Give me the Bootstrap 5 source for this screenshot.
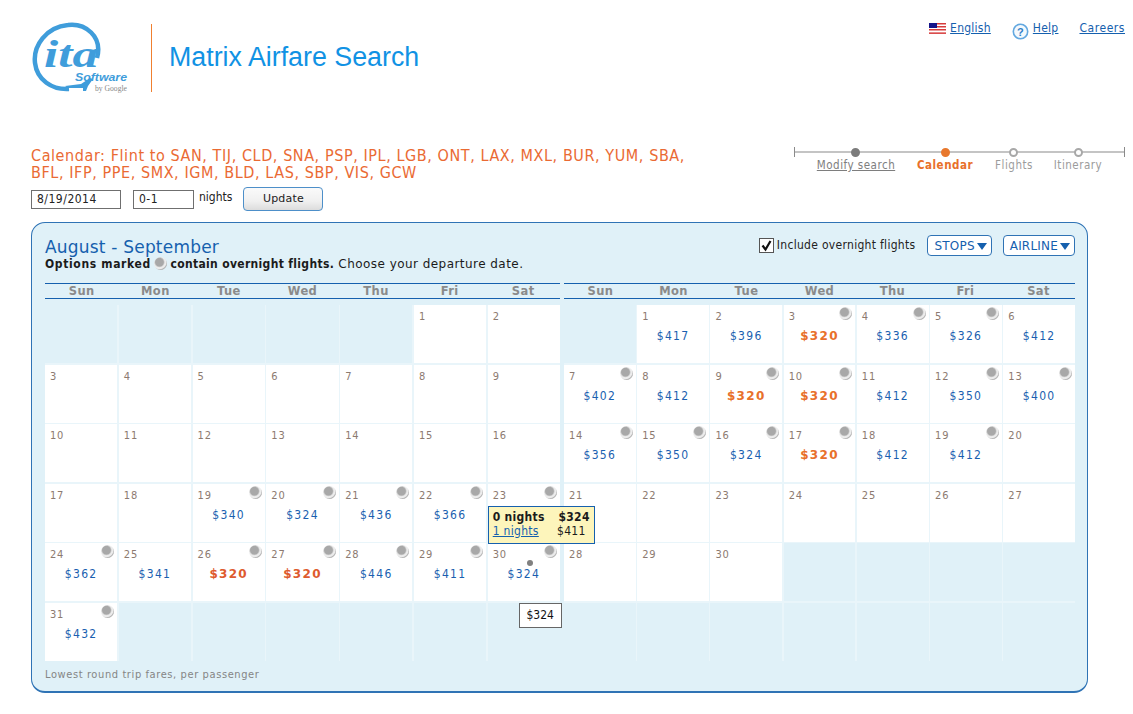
<!DOCTYPE html>
<html lang="en">
<head>
<meta charset="utf-8">
<title>Matrix Airfare Search</title>
<link href="https://cdn.jsdelivr.net/npm/bootstrap@5.3.0/dist/css/bootstrap.min.css" rel="stylesheet">
<style>
body{font-family:"DejaVu Sans","Liberation Sans",sans-serif;font-size:11px;color:#222;background:#fff;width:1133px;height:714px;overflow:hidden;font-stretch:condensed}
a{color:#1560ae}
.page-top{height:145px;padding:0 8px 0 31px}
.logo-wrap{width:120px;padding-top:22px}
.brand-rule{width:1px;height:68px;background:#f08030;margin-top:24px}
.brand-title{font-family:"Liberation Sans",sans-serif;font-size:26.8px;color:#1192e4;margin:41px 0 0 17px;line-height:32px;font-weight:400;font-stretch:normal}
.top-links{padding-top:19px;gap:21px;font-size:12px;letter-spacing:.25px}
.link-wide{letter-spacing:.55px}
.trip-head{padding:0 8px 0 31px;height:75px;margin-top:2px}
.trip-title{font-family:"DejaVu Sans",sans-serif;font-size:16px;line-height:17px;color:#ea6a33;margin:0;font-weight:400;width:668px;letter-spacing:.58px}
.trip-form{margin-top:6px;gap:12px;font-size:12px}
.field{height:19px;border:1px solid #6f6f6f;padding:0 5px;font:12px "DejaVu Sans",sans-serif;font-stretch:condensed;letter-spacing:.5px;color:#222;border-radius:0;background:#fff}
.f-date{width:90px}
.f-nights{width:61px}
.nights-word{margin:-5px 0 0 -7px}
.update-btn{width:80px;height:24px;padding:0;font-size:11px;letter-spacing:.2px;color:#222;border:1px solid #4d8fc9;border-radius:4px;background:linear-gradient(#fafafa,#f0f0f0 60%,#dcdcdc);margin-left:-1px}
.steps{width:331px;position:relative;height:40px;margin-top:-3px}
.step-line{position:absolute;left:0;right:0;top:7px;height:2px;background:#c4c4c4}
.step-end{position:absolute;top:3px;width:1px;height:10px;background:#8a8a8a}
.step-dot{position:absolute;top:4px;width:9px;height:9px;border-radius:50%;background:#fff;border:2px solid #a8a8a8}
.step-lbl{position:absolute;top:13px;font-size:11.5px;letter-spacing:.5px;white-space:nowrap;color:#9c9c9c;transform:translateX(-50%)}
.panel{margin-left:31px;width:1057px;height:471px;background:#e0f1f8;border:1px solid #2f73b5;border-width:1px 1px 2px 1px;border-radius:14px;padding:12px 12px 0 13px;position:relative}
.panel-title{font-size:17px;line-height:21px;color:#1560ae;font-weight:400;margin:2px 0 0;letter-spacing:.2px;font-stretch:normal}
.panel-note{font-size:12px;line-height:15px;color:#1b1b1b;letter-spacing:.45px;margin-top:-1px;font-stretch:normal}
.panel-note b{font-stretch:condensed;letter-spacing:.33px}
.note-lead{letter-spacing:.65px}
.ctrls{gap:11px;font-size:12px;letter-spacing:.3px}
.ovr-lbl{margin-top:1px;margin-right:1px}
.chk{width:15px;height:15px;border:1px solid #555;background:#fff;display:inline-flex;margin-right:3px;margin-left:-1px}
.filter-btn{height:21px;border:1px solid #2f73b5;border-radius:4px;background:#fff;color:#1560ae;font-size:12px;padding:0 4px 0 6px;letter-spacing:.2px}
.filter-btn::after{content:"";display:inline-block;border:5px solid transparent;border-top:7px solid #1560ae;border-bottom:0;margin-left:2px;vertical-align:0}
.months{gap:4px;margin-top:11px}
.mon-a{width:515px}
.mon-b{width:511px}
.dow{display:grid;grid-template-columns:repeat(7,1fr);border-top:1px solid #1560ae;border-bottom:1px solid #1560ae;height:16px;line-height:14px;font-weight:700;color:#8a8a8a;text-align:center;letter-spacing:.4px;font-stretch:normal}
.dow span{font-size:11.5px}
.dgrid{display:grid;grid-template-columns:repeat(7,1fr);grid-auto-rows:58px;gap:1.5px;margin-top:6px;background:#e9f5fa}
.day{background:#fff;position:relative;padding:5px 0 0 5px;font-size:11px;letter-spacing:.8px;color:#8c7a70;line-height:14px}
.day.off{background:#e0f1f8}
.moon{position:absolute;top:2px;right:3px;width:13px;height:13px;border-radius:50%;background:radial-gradient(circle at 42% 40%,#a8a8a8 0 36%,#ececec 50% 60%,#a2a2a2 72%)}
.moon-inl{position:static;display:inline-block;vertical-align:-2px;margin:0 -1px}
.fare{position:absolute;left:0;right:0;top:24px;text-align:center;font-size:12px;line-height:14px;color:#1a5fb0;letter-spacing:1.3px}
.fare.low{color:#e8702a;font-weight:700;font-stretch:normal}
.fare.low-r{color:#de5b2e;font-weight:700;font-stretch:normal}
.pop{position:absolute;left:0;top:22px;width:107px;height:38px;background:#fdf5bb;border:1px solid #1560ae;z-index:3;padding:3px 4px;font-size:12px;line-height:14px;color:#1b1b1b;letter-spacing:.3px}
.tip{position:absolute;left:31px;top:60px;width:43px;height:25px;background:#fff;border:1px solid #666;z-index:3;font-size:12px;line-height:23px;text-align:center;color:#111;letter-spacing:0}
.pt{position:absolute;left:39px;top:17px;width:6px;height:6px;border-radius:50%;background:#808080}
.foot-note{font-size:11px;color:#858585;letter-spacing:.6px;margin-top:6px}
</style>
</head>
<body>
<div class="page-top d-flex">
  <div class="logo-wrap">
    <svg width="110" height="76" viewBox="0 0 110 76" aria-label="ITA Software by Google">
      <path d="M66 36C72 14 54 1 37 3 15 5 2 24 4 41c2 17 17 27 34 26" fill="none" stroke="#3f9ddb" stroke-width="4.5"/>
      <path d="M34 64l16-2 9-6 3 1-5 7-2 5-3 0 0-3-15 0z" fill="#3f9ddb"/>
      <text x="13" y="45" font-family="Liberation Serif" font-style="italic" font-weight="700" font-size="38" fill="#3f9ddb" textLength="54" lengthAdjust="spacingAndGlyphs">ita</text>
      <text x="44" y="59" font-family="Liberation Sans" font-style="italic" font-weight="700" font-size="11.5" fill="#3f9ddb" textLength="52" lengthAdjust="spacingAndGlyphs">Software</text>
      <text x="64" y="69" font-family="Liberation Serif" font-size="7.5" fill="#888" textLength="32" lengthAdjust="spacingAndGlyphs">by Google</text>
    </svg>
  </div>
  <div class="brand-rule flex-shrink-0"></div>
  <h1 class="brand-title">Matrix Airfare Search</h1>
  <div class="top-links d-flex ms-auto align-items-start">
    <span class="d-flex align-items-start gap-1">
      <svg width="17" height="11" viewBox="0 0 17 11" class="mt-1"><rect width="17" height="11" fill="#fff"/><g fill="#d63a3a"><rect width="17" height="1.5" y="0"/><rect width="17" height="1.5" y="3"/><rect width="17" height="1.5" y="6"/><rect width="17" height="1.5" y="9.4"/></g><rect width="8" height="5" fill="#14148a"/></svg>
      <a href="#">English</a>
    </span>
    <span class="d-flex align-items-start gap-1">
      <svg width="17" height="17" viewBox="0 0 17 17" class="mt-1"><circle cx="8.5" cy="8.5" r="7.2" fill="#f4f9fd" stroke="#62a8e0" stroke-width="1.6"/><text x="8.5" y="12.5" text-anchor="middle" font-family="Liberation Sans" font-weight="700" font-size="11" fill="#2f80c8">?</text></svg>
      <a href="#">Help</a>
    </span>
    <a class="link-wide" href="#">Careers</a>
  </div>
</div>
<div class="trip-head d-flex justify-content-between">
  <div>
    <h2 class="trip-title">Calendar: Flint to SAN, TIJ, CLD, SNA, PSP, IPL, LGB, ONT, LAX, MXL, BUR, YUM, SBA, BFL, IFP, PPE, SMX, IGM, BLD, LAS, SBP, VIS, GCW</h2>
    <div class="trip-form d-flex align-items-center">
      <input class="field f-date" value="8/19/2014" aria-label="Date">
      <input class="field f-nights" value="0-1" aria-label="Nights">
      <span class="nights-word">nights</span>
      <button class="btn update-btn" type="button">Update</button>
    </div>
  </div>
  <div class="steps">
    <div class="step-line"></div>
    <div class="step-end" style="left:0"></div>
    <div class="step-end" style="right:0"></div>
    <div class="step-dot" style="left:57px;background:#7c7c7c;border-color:#7c7c7c"></div>
    <div class="step-dot" style="left:147px;background:#e8782d;border-color:#e8782d"></div>
    <div class="step-dot" style="left:215px"></div>
    <div class="step-dot" style="left:280px"></div>
    <a class="step-lbl" href="#" style="left:62px;color:#7e7e7e">Modify search</a>
    <span class="step-lbl fw-bold" style="left:151px;color:#e8702a">Calendar</span>
    <span class="step-lbl" style="left:220px">Flights</span>
    <span class="step-lbl" style="left:284px">Itinerary</span>
  </div>
</div>
<div class="panel">
  <div class="d-flex justify-content-between">
    <div>
      <h3 class="panel-title">August - September</h3>
      <div class="panel-note"><b><span class="note-lead">Options marked </span><i class="moon moon-inl"></i> contain overnight flights.</b> Choose your departure date.</div>
    </div>
    <div class="ctrls d-flex align-items-start">
      <span class="ovr-lbl d-flex align-items-center"><span class="chk"><svg width="13" height="13" viewBox="0 0 13 13"><path d="M2.5 6.5l3 4 5-8.5" fill="none" stroke="#111" stroke-width="2.2"/></svg></span>Include overnight flights</span>
      <button class="filter-btn" type="button">STOPS</button>
      <button class="filter-btn" type="button">AIRLINE</button>
    </div>
  </div>
  <div class="months d-flex">
    <div class="mon-a">
      <div class="dow"><span>Sun</span><span>Mon</span><span>Tue</span><span>Wed</span><span>Thu</span><span>Fri</span><span>Sat</span></div>
      <div class="dgrid">
        <div class="day off"></div><div class="day off"></div><div class="day off"></div><div class="day off"></div><div class="day off"></div>
        <div class="day">1</div><div class="day">2</div>
        <div class="day">3</div><div class="day">4</div><div class="day">5</div><div class="day">6</div><div class="day">7</div><div class="day">8</div><div class="day">9</div>
        <div class="day">10</div><div class="day">11</div><div class="day">12</div><div class="day">13</div><div class="day">14</div><div class="day">15</div><div class="day">16</div>
        <div class="day">17</div><div class="day">18</div>
        <div class="day">19<i class="moon"></i><div class="fare">$340</div></div>
        <div class="day">20<i class="moon"></i><div class="fare">$324</div></div>
        <div class="day">21<i class="moon"></i><div class="fare">$436</div></div>
        <div class="day">22<i class="moon"></i><div class="fare">$366</div></div>
        <div class="day">23<i class="moon"></i><div class="pop"><div class="d-flex justify-content-between fw-bold"><span>0 nights</span><span>$324</span></div><div class="d-flex justify-content-between"><a href="#">1 nights</a><span class="me-1">$411</span></div></div></div>
        <div class="day">24<i class="moon"></i><div class="fare">$362</div></div>
        <div class="day">25<div class="fare">$341</div></div>
        <div class="day">26<i class="moon"></i><div class="fare low-r">$320</div></div>
        <div class="day">27<i class="moon"></i><div class="fare low-r">$320</div></div>
        <div class="day">28<i class="moon"></i><div class="fare">$446</div></div>
        <div class="day">29<i class="moon"></i><div class="fare">$411</div></div>
        <div class="day">30<i class="moon"></i><i class="pt"></i><div class="fare">$324</div><div class="tip">$324</div></div>
        <div class="day">31<i class="moon"></i><div class="fare">$432</div></div>
        <div class="day off"></div><div class="day off"></div><div class="day off"></div><div class="day off"></div><div class="day off"></div><div class="day off"></div>
      </div>
    </div>
    <div class="mon-b">
      <div class="dow"><span>Sun</span><span>Mon</span><span>Tue</span><span>Wed</span><span>Thu</span><span>Fri</span><span>Sat</span></div>
      <div class="dgrid">
        <div class="day off"></div>
        <div class="day">1<div class="fare">$417</div></div>
        <div class="day">2<div class="fare">$396</div></div>
        <div class="day">3<i class="moon"></i><div class="fare low">$320</div></div>
        <div class="day">4<i class="moon"></i><div class="fare">$336</div></div>
        <div class="day">5<i class="moon"></i><div class="fare">$326</div></div>
        <div class="day">6<div class="fare">$412</div></div>
        <div class="day">7<i class="moon"></i><div class="fare">$402</div></div>
        <div class="day">8<div class="fare">$412</div></div>
        <div class="day">9<i class="moon"></i><div class="fare low">$320</div></div>
        <div class="day">10<i class="moon"></i><div class="fare low">$320</div></div>
        <div class="day">11<div class="fare">$412</div></div>
        <div class="day">12<i class="moon"></i><div class="fare">$350</div></div>
        <div class="day">13<i class="moon"></i><div class="fare">$400</div></div>
        <div class="day">14<i class="moon"></i><div class="fare">$356</div></div>
        <div class="day">15<i class="moon"></i><div class="fare">$350</div></div>
        <div class="day">16<i class="moon"></i><div class="fare">$324</div></div>
        <div class="day">17<i class="moon"></i><div class="fare low">$320</div></div>
        <div class="day">18<div class="fare">$412</div></div>
        <div class="day">19<i class="moon"></i><div class="fare">$412</div></div>
        <div class="day">20</div>
        <div class="day">21</div><div class="day">22</div><div class="day">23</div><div class="day">24</div><div class="day">25</div><div class="day">26</div><div class="day">27</div>
        <div class="day">28</div><div class="day">29</div><div class="day">30</div>
        <div class="day off"></div><div class="day off"></div><div class="day off"></div><div class="day off"></div>
        <div class="day off"></div><div class="day off"></div><div class="day off"></div><div class="day off"></div><div class="day off"></div><div class="day off"></div><div class="day off"></div>
      </div>
    </div>
  </div>
  <div class="foot-note">Lowest round trip fares, per passenger</div>
</div>
<script src="https://cdn.jsdelivr.net/npm/bootstrap@5.3.0/dist/js/bootstrap.bundle.min.js"></script>
</body>
</html>
